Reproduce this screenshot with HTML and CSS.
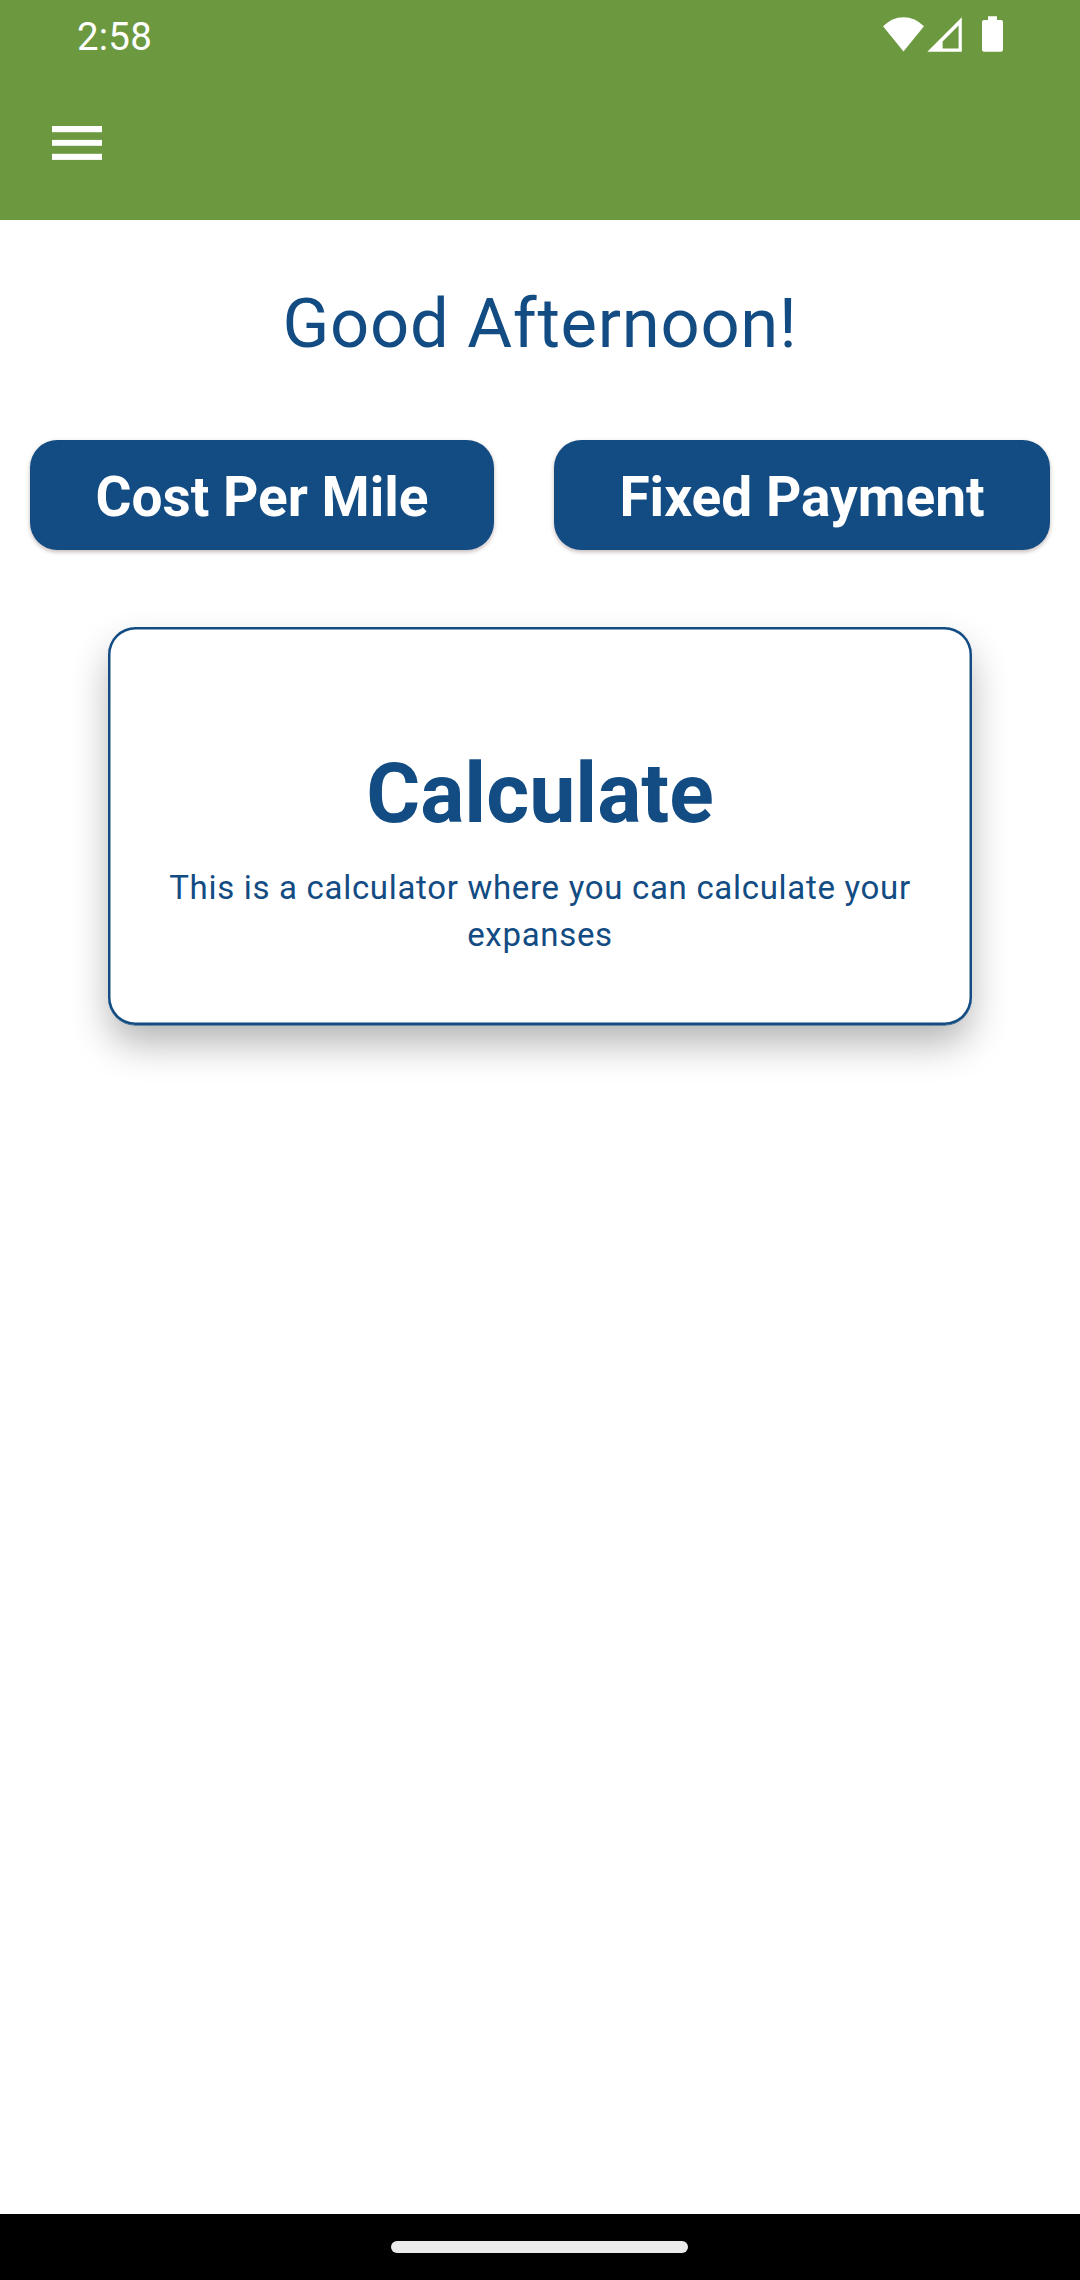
FILE: index.html
```
<!DOCTYPE html>
<html lang="en">
<head>
<meta charset="utf-8">
<title>Home</title>
<link rel="stylesheet" href="styles.css">
</head>
<body>
<div class="screen">
  <header class="app-header">
    <div class="status-bar">
      <span class="clock">2:58</span>
      <svg class="status-icons" width="122" height="38" viewBox="882 15 122 38" fill="#fff">
        <path d="M903.5 51.6 883 26.3Q892 17.2 903.5 17.2T924 26.3Z"/>
        <path fill-rule="evenodd" d="M961.8 17.3V51.7H927.3ZM958.6 25.6 942.6 41.6V48.4H958.6Z"/>
        <path d="M988 16.2H997V20H1001Q1003 20 1003 22V49.5Q1003 51.7 1001 51.7H984Q982 51.7 982 49.5V22Q982 20 984 20H988Z"/>
      </svg>
    </div>
    <div class="toolbar">
      <button class="menu-button" aria-label="Open menu">
        <svg width="66" height="66" viewBox="0 0 66 66" fill="#fff">
          <rect x="8" y="16" width="50" height="6.2"/>
          <rect x="8" y="29.9" width="50" height="5.9"/>
          <rect x="8" y="43.8" width="50" height="6.1"/>
        </svg>
      </button>
    </div>
  </header>
  <main class="content">
    <h1 class="greeting">Good Afternoon!</h1>
    <div class="actions">
      <button class="action">Cost Per Mile</button>
      <button class="action">Fixed Payment</button>
    </div>
    <section class="card">
      <h2 class="card-title">Calculate</h2>
      <p class="card-text">This is a calculator where you can calculate your expanses</p>
    </section>
  </main>
  <footer class="nav-bar"><div class="nav-pill"></div></footer>
</div>
</body>
</html>
```
FILE: styles.css
```
* { box-sizing: border-box; }
body { margin: 0; font-family: Roboto, sans-serif; background: #fff; color: #124c83; }
button { border: 0; font: inherit; }
.screen { width: 1080px; height: 2280px; display: flex; flex-direction: column; }
.app-header { height: 220px; background: #6c993f; color: #fff; }
.status-bar { height: 66px; padding: 0 76px 0 77px; display: flex; justify-content: space-between; align-items: flex-start; }
.clock { font-size: 38.5px; line-height: 46px; padding-top: 14px; letter-spacing: 0.2px; }
.status-icons { margin-top: 15px; }
.toolbar { height: 154px; padding: 44px; }
.menu-button { display: block; padding: 0; background: none; width: 66px; height: 66px; }
.menu-button svg { display: block; }
.content { flex: 1; }
.greeting { margin: 0; padding-top: 63px; font-size: 68.75px; line-height: 81px; font-weight: 400; letter-spacing: 0.72px; text-align: center; }
.actions { margin-top: 76px; display: flex; justify-content: space-around; }
.action { height: 110px; padding: 4px 65.8px 0; border-radius: 27.5px; background: #124c83; color: #fff; font-size: 55px; font-weight: 700; line-height: 64px; box-shadow: 0 2px 4px rgba(60, 20, 20, 0.3); }
.card { width: 864px; height: 398px; margin: 77px auto 0; padding: 118px 55px 0; border-radius: 27.5px; text-align: center; box-shadow: inset 0 0 0 2.5px #124c83, 0 0.5px 0 #124c83, 0 20px 38px -2px rgba(0, 0, 0, 0.3); }
.card-title { margin: 0; font-size: 82.5px; line-height: 97px; font-weight: 700; }
.card-text { margin: 22px 0 0; font-size: 33px; line-height: 47px; letter-spacing: 0.69px; }
.nav-bar { height: 66px; background: #000; display: flex; padding: 27px 0 0 391px; }
.nav-pill { width: 297px; height: 12px; border-radius: 6px; background: #ebebeb; }
```
